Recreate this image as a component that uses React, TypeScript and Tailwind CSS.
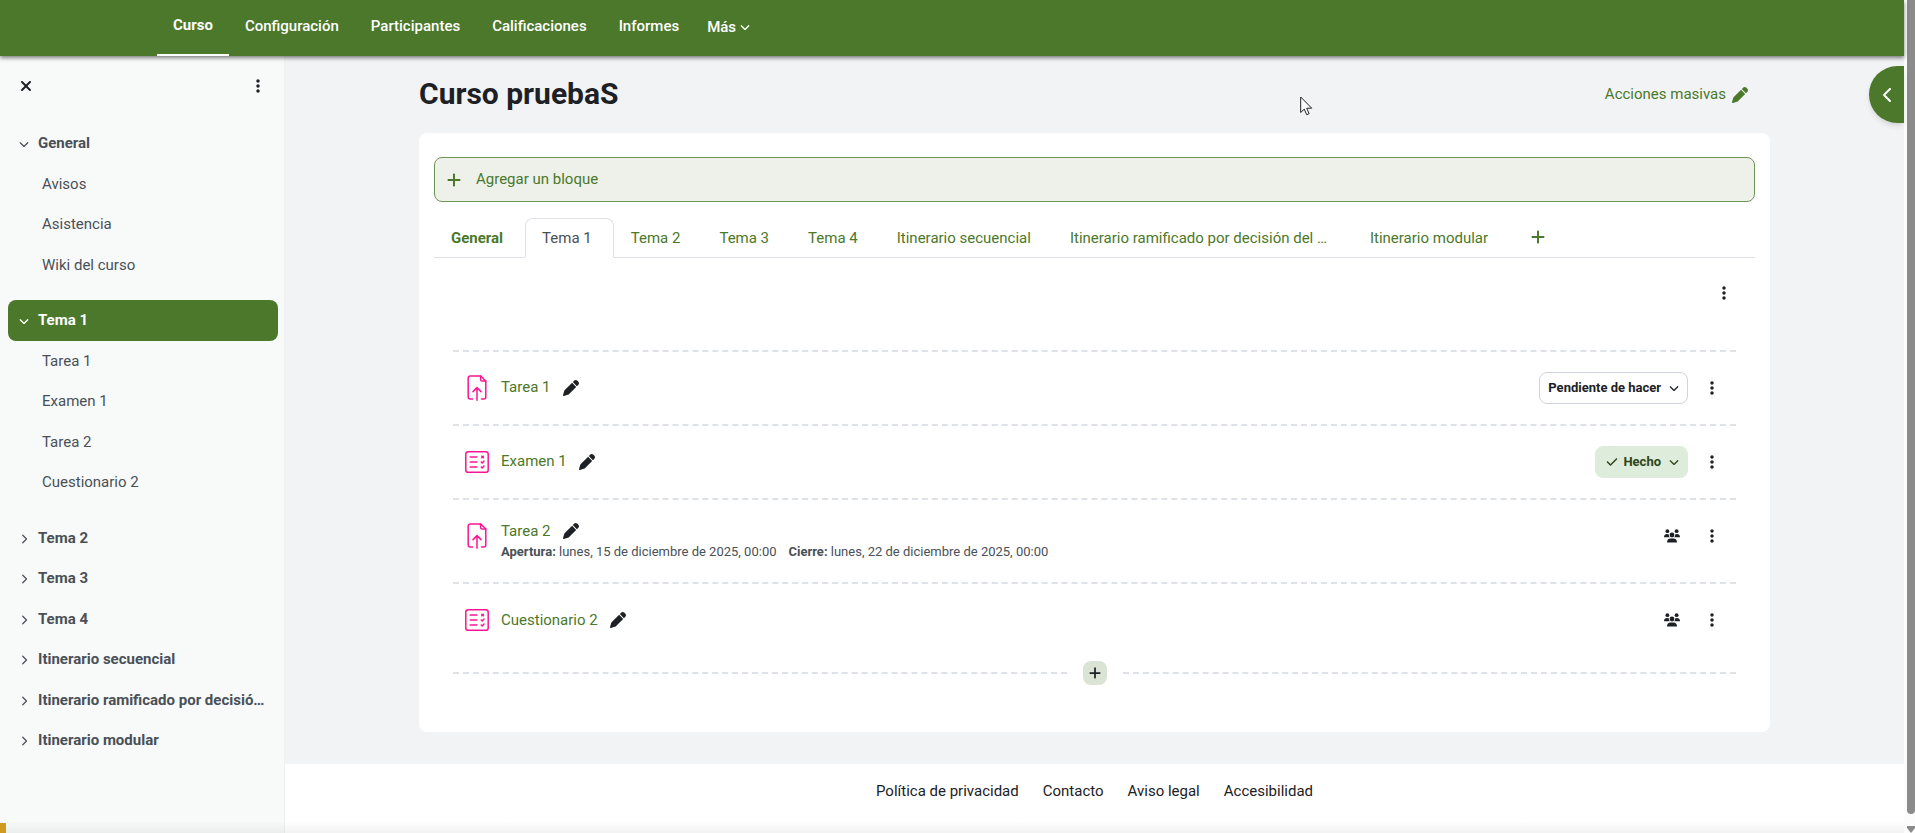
import React from 'react';
import { FaEllipsisVertical, FaPen, FaPlus, FaCheck, FaChevronDown, FaChevronRight, FaChevronLeft, FaXmark } from 'react-icons/fa6';

const FONT = "font-['Roboto','Liberation_Sans',sans-serif]";

type ModuleKind = 'assign' | 'quiz';
type Completion = 'todo' | 'done';

interface Activity {
  name:        string;
  kind:        ModuleKind;
  completion?: Completion;
  dates?:      { label: string; value: string }[];
}

interface IndexSection {
  name:    string;
  active?: boolean;
  items?:  string[];
}

const NAV = ['Curso', 'Configuración', 'Participantes', 'Calificaciones', 'Informes'];

const SECTIONS: IndexSection[] = [
  { name: 'General', items: ['Avisos', 'Asistencia', 'Wiki del curso'] },
  { name: 'Tema 1', active: true, items: ['Tarea 1', 'Examen 1', 'Tarea 2', 'Cuestionario 2'] },
  { name: 'Tema 2' },
  { name: 'Tema 3' },
  { name: 'Tema 4' },
  { name: 'Itinerario secuencial' },
  { name: 'Itinerario ramificado por decisió…' },
  { name: 'Itinerario modular' },
];

const TABS: { name: string; wide?: boolean }[] = [
  { name: 'General' },
  { name: 'Tema 1' },
  { name: 'Tema 2' },
  { name: 'Tema 3' },
  { name: 'Tema 4' },
  { name: 'Itinerario secuencial' },
  { name: 'Itinerario ramificado por decisión del …', wide: true },
  { name: 'Itinerario modular' },
];

const ACTIVITIES: Activity[] = [
  { name: 'Tarea 1', kind: 'assign', completion: 'todo' },
  { name: 'Examen 1', kind: 'quiz', completion: 'done' },
  {
    name: 'Tarea 2',
    kind: 'assign',
    dates: [
      { label: 'Apertura:', value: 'lunes, 15 de diciembre de 2025, 00:00' },
      { label: 'Cierre:', value: 'lunes, 22 de diciembre de 2025, 00:00' },
    ],
  },
  { name: 'Cuestionario 2', kind: 'quiz' },
];

const FOOTER = ['Política de privacidad', 'Contacto', 'Aviso legal', 'Accesibilidad'];

const AssignIcon = () => (
  <svg viewBox="0 0 24 26" className="h-[26px] w-6 shrink-0" fill="none" stroke="#fb1493" strokeWidth="1.5" strokeLinecap="round" strokeLinejoin="round">
    <path d="M7.5 24H5.200a2 2 0 0 1-2-2V3a2 2 0 0 1 2-2h10.600l5 5v16a2 2 0 0 1-2 2h-2.300" />
    <path d="M15.600 1v3.400A1.600 1.600 0 0 0 17.200 6h3.600" />
    <path d="M12 25.200V12.800M8 16.600l4-4 4 4" />
  </svg>
);

const QuizIcon = () => (
  <svg viewBox="0 0 24 24" className="size-6 shrink-0" fill="none" stroke="#fb1493" strokeWidth="1.5" strokeLinecap="round" strokeLinejoin="round">
    <rect x="0.8" y="1.7" width="22.4" height="20.6" rx="2.4" />
    <path d="M5.200 7h6.600M5.200 12h6.600M5.200 17h6.600" />
    <path d="M16.800 6.200l1.600 1.600M18.400 6.200l-1.600 1.600M16.200 12l1 1 1.800-2M16.200 17l1 1 1.800-2" />
  </svg>
);

const GroupIcon = () => (
  <svg viewBox="0 0 16 14" className="h-[14px] w-4" fill="#1d2125">
    <circle cx="3.4" cy="2.2" r="1.9" />
    <circle cx="12.6" cy="2.2" r="1.9" />
    <circle cx="8" cy="6" r="2.4" />
    <path d="M0 8.200C0 6.200 1.300 5 3 5c.8 0 1.500.2 2 .6-.3 1 .1 2 .7 2.600H0zM16 8.200C16 6.200 14.700 5 13 5c-.8 0-1.500.2-2 .6.3 1-.1 2-.7 2.600H16z" />
    <path d="M3 13.400C3 11 4.400 9.400 6.500 9.400h3c2.100 0 3.500 1.600 3.500 4z" />
  </svg>
);

const Pointer = () => (
  <svg viewBox="0 0 13 20" className="absolute left-[1300px] top-24 z-20 h-5 w-[13px]" fill="#fff" stroke="#1d2125" strokeLinejoin="round">
    <path d="M.7 1v15.500l3.600-3.400 2.400 5.600 2.400-1-2.400-5.500h5z" />
  </svg>
);

const Kebab: React.FC<{ label: string }> = ({ label }) => (
  <button type="button" aria-label={label} className="flex size-8 items-center justify-center text-[#1d2125]">
    <FaEllipsisVertical className="size-4" />
  </button>
);

const TopNav = () => (
  <header className="relative z-10 flex h-14 shrink-0 bg-[#4b782a] pl-[157px] text-[15px] font-medium text-white shadow-[0_2px_4px_rgba(0,0,0,0.5)]">
    <nav className="flex">
      {NAV.map((item, i) => (
        <a
          key={item}
          href="#"
          className={`flex items-center border-b-2 px-4 ${i === 0 ? 'border-white pb-1 font-bold' : 'border-transparent pb-[2px]'}`}
        >
          {item}
        </a>
      ))}
      <button type="button" className="flex items-center gap-1 px-3 pb-[2px]">
        Más
        <FaChevronDown className="size-[10px]" />
      </button>
    </nav>
  </header>
);

const CourseIndex = () => (
  <aside className="flex w-[285px] shrink-0 flex-col border-r border-[#eef0f2] bg-[#f8faf9]">
    <div className="flex items-center justify-between px-[10px] py-[14px]">
      <button type="button" aria-label="Cerrar índice del curso" className="flex size-8 items-center justify-center text-[#1d2125]">
        <FaXmark className="size-4" />
      </button>
      <Kebab label="Opciones del índice" />
    </div>

    <nav className="pl-2 pr-[6px] pt-[7px] text-[15px] leading-normal text-[#495057]">
      {SECTIONS.map((s) => (
        <div key={s.name} className={s.items ? 'pb-[15px]' : ''}>
          <div
            className={`flex items-center gap-2 rounded-lg border border-transparent px-[9px] py-2 font-bold ${s.active ? 'bg-[#4b782a] text-white' : ''}`}
          >
            <button type="button" aria-label={`Desplegar ${s.name}`} className="flex w-3 justify-center pt-[2px]">
              {s.items ? <FaChevronDown className="size-[10px]" /> : <FaChevronRight className="size-[10px]" />}
            </button>
            <a href="#" className="flex-1 whitespace-nowrap">{s.name}</a>
          </div>
          {s.items?.map((item) => (
            <a key={item} href="#" className="block border border-transparent py-2 pl-[33px]">
              {item}
            </a>
          ))}
        </div>
      ))}
    </nav>
  </aside>
);

const CompletionButton: React.FC<{ state: Completion }> = ({ state }) => (
  <button
    type="button"
    className={`
      flex h-8 items-center gap-2 rounded-lg border px-2 text-[13px] font-bold
      ${state === 'done'
        ? 'border-[#deecdb] bg-[#deecdb] text-[#2c4619]'
        : 'border-[#ced4da] bg-white text-[#1d2125]'
      }
    `}
  >
    {state === 'done' ? (
      <span className="flex items-center gap-[5px] pl-[2px]">
        <FaCheck className="size-3" />
        Hecho
      </span>
    ) : 'Pendiente de hacer'}
    <FaChevronDown className="size-[10px]" />
  </button>
);

const ActivityRow: React.FC<{ activity: Activity }> = ({ activity }) => (
  <li className="flex items-start border-t-2 border-dashed border-[#dee2e6] py-5 pl-3 pr-2">
    <div className="flex h-8 items-center">
      {activity.kind === 'assign' ? <AssignIcon /> : <QuizIcon />}
    </div>

    <div className={`min-w-0 flex-1 pl-3 ${activity.dates ? '' : 'flex h-8 items-center'}`}>
      <div className="flex items-center gap-3">
        <a href="#" className="text-[15px] leading-normal text-[#4b782a]">{activity.name}</a>
        <button type="button" aria-label={`Editar ${activity.name}`} className="text-[#1d2125]">
          <FaPen className="size-4" />
        </button>
      </div>
      {activity.dates && (
        <div className="flex gap-3 text-[13px] leading-5 text-[#495057]">
          {activity.dates.map((d) => (
            <span key={d.label}><strong>{d.label}</strong> {d.value}</span>
          ))}
        </div>
      )}
    </div>

    <div className="flex items-center gap-2">
      {activity.completion ? (
        <CompletionButton state={activity.completion} />
      ) : (
        <button type="button" aria-label="Grupos" className="flex size-8 items-center justify-center">
          <GroupIcon />
        </button>
      )}
      <Kebab label={`Acciones de ${activity.name}`} />
    </div>
  </li>
);

const SectionTabs = () => (
  <div className="flex border-b border-[#dee2e6] text-[15px] leading-normal text-[#4b782a]">
    {TABS.map((tab, i) => (
      <a
        key={tab.name}
        href="#"
        className={`
          -mb-px whitespace-nowrap rounded-t-lg border pb-[7px] pl-4 pr-[21px] pt-2
          ${i === 0 ? 'font-bold' : ''}
          ${i === 1 ? 'border-[#dee2e6] border-b-white bg-white text-[#495057]' : 'border-transparent'}
          ${tab.wide ? 'min-w-[300px]' : ''}
        `}
      >
        {tab.name}
      </a>
    ))}
    <button type="button" aria-label="Agregar sección" className="px-5">
      <FaPlus className="size-4" />
    </button>
  </div>
);

export default function App() {
  return (
    <div className={`${FONT} relative flex h-screen overflow-hidden bg-white text-[#1d2125]`}>
      <div className="flex min-w-0 flex-1 flex-col">
        <TopNav />

        <div className="relative flex min-h-0 flex-1">
          <CourseIndex />

          <div className="flex min-w-0 flex-1 flex-col bg-[#f1f3f5]">
            <main className="mx-auto w-full max-w-[1351px] flex-1">
              <div className="flex h-[77px] items-center justify-between pr-[22px]">
                <h1 className="pb-[2px] text-[30px] font-bold">Curso pruebaS</h1>
                <button type="button" className="flex items-center gap-[6px] text-[15px] text-[#4b782a]">
                  Acciones masivas
                  <FaPen className="size-4" />
                </button>
              </div>

              <div className="rounded-lg bg-white px-[15px] pb-[47px] pt-6">
                <button
                  type="button"
                  className="flex h-[45px] w-full items-center gap-[14px] rounded-lg border border-[#6f9556] bg-[#edf1ea] px-[11px] text-[15px] text-[#4b782a]"
                >
                  <FaPlus className="size-4" />
                  Agregar un bloque
                </button>

                <div className="pt-4">
                  <SectionTabs />
                </div>

                <div className="flex h-[92px] items-start justify-end px-[15px] pt-[19px]">
                  <Kebab label="Acciones del tema" />
                </div>

                <div className="px-[19px]">
                  <ul>
                    {ACTIVITIES.map((a) => (
                      <ActivityRow key={a.name} activity={a} />
                    ))}
                  </ul>
                  <div className="flex items-center gap-4 pt-[5px]">
                    <div className="flex-1 border-t-2 border-dashed border-[#dee2e6]" />
                    <button type="button" aria-label="Agregar actividad" className="flex size-6 items-center justify-center rounded-lg bg-[#dbe4d4]">
                      <FaPlus className="size-[14px]" />
                    </button>
                    <div className="flex-1 border-t-2 border-dashed border-[#dee2e6]" />
                  </div>
                </div>
              </div>
            </main>

            <footer className="flex h-[69px] items-start justify-center gap-6 bg-white pt-4 text-[15px] leading-normal">
              {FOOTER.map((link) => (
                <a key={link} href="#">{link}</a>
              ))}
            </footer>
          </div>

          {/* Block drawer toggle */}
          <button
            type="button"
            aria-label="Abrir cajón de bloques"
            className="absolute right-0 top-[10px] flex h-[57px] w-[35px] items-center justify-center rounded-l-full bg-[#4b782a] pl-[3px] text-white shadow-md"
          >
            <FaChevronLeft className="size-4" />
          </button>

          {/* Bottom edge */}
          <div className="absolute inset-x-0 bottom-0 h-3 bg-linear-to-b from-transparent to-black/5" />
          <div className="absolute bottom-0 left-0 h-[10px] w-[6px] bg-[#cf9b1c]" />
        </div>
      </div>

      {/* Scrollbar */}
      <div className="flex w-[11px] shrink-0 flex-col items-end justify-between bg-[#fcfcfc]">
        <div className="mb-3 w-2 flex-1 rounded-b-full bg-[#8b8b8b]" />
        <svg viewBox="0 0 8 7" className="h-[7px] w-2" fill="#8b8b8b">
          <path d="M0 0h8v2L4 7 0 2z" />
        </svg>
      </div>

      <Pointer />
    </div>
  );
}
